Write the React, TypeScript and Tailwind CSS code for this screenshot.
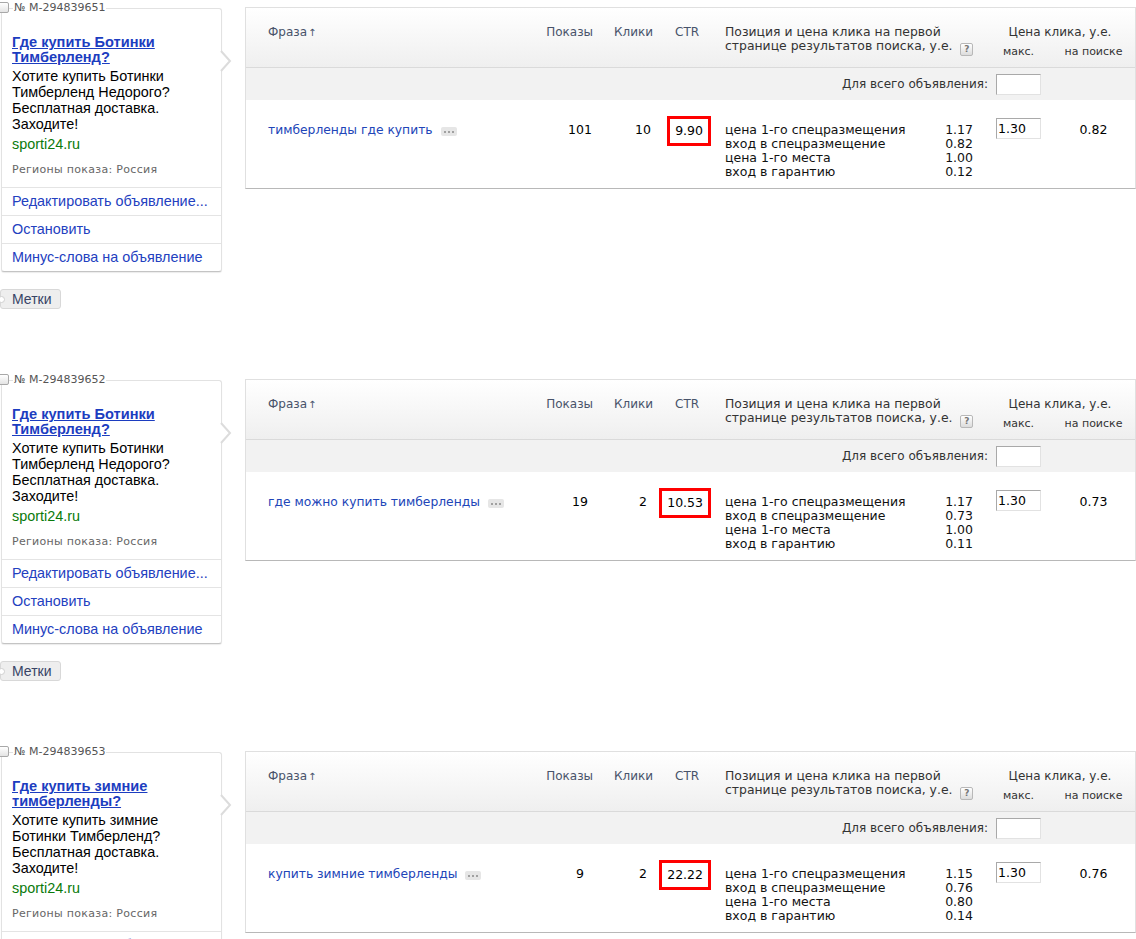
const ADS = [
  {
    id: "294839651",
    title: ["Где купить Ботинки", "Тимберленд?"],
    body: ["Хотите купить Ботинки", "Тимберленд Недорого?", "Бесплатная доставка.", "Заходите!"],
    phrase: "тимберленды где купить",
    shows: "101",
    clicks: "10",
    ctr: "9.90",
    prices: ["1.17", "0.82", "1.00", "0.12"],
    max: "1.30",
    search: "0.82",
  },
  {
    id: "294839652",
    title: ["Где купить Ботинки", "Тимберленд?"],
    body: ["Хотите купить Ботинки", "Тимберленд Недорого?", "Бесплатная доставка.", "Заходите!"],
    phrase: "где можно купить тимберленды",
    shows: "19",
    clicks: "2",
    ctr: "10.53",
    prices: ["1.17", "0.73", "1.00", "0.11"],
    max: "1.30",
    search: "0.73",
  },
  {
    id: "294839653",
    title: ["Где купить зимние", "тимберленды?"],
    body: ["Хотите купить зимние", "Ботинки Тимберленд?", "Бесплатная доставка.", "Заходите!"],
    phrase: "купить зимние тимберленды",
    shows: "9",
    clicks: "2",
    ctr: "22.22",
    prices: ["1.15", "0.76", "0.80", "0.14"],
    max: "1.30",
    search: "0.76",
  },
];

const PRICE_LABELS = ["цена 1-го спецразмещения", "вход в спецразмещение", "цена 1-го места", "вход в гарантию"];

const GRID = "grid grid-cols-[284px_67px_60px_60px_268px_67px_1fr]";

type Ad = (typeof ADS)[number];

function AdCard({ ad }: { ad: Ad }) {
  return (
    <div className="w-[232px] shrink-0 font-['Liberation_Sans',Arial,sans-serif]">
      <div className="relative mt-[8px] ml-[1px] w-[221px] rounded-[3px] border border-[#e2e2e2] border-b-[#c4c4c4] bg-white shadow-[0_1px_1px_rgba(0,0,0,0.08)]">
        {/* checkbox + number, sitting on the top border */}
        <span className="absolute -left-[4px] -top-[7px] h-[11px] w-[11px] rounded-[2px] border border-[#a8a8a8] bg-gradient-to-b from-white to-[#e4e4e4]" />
        <span className="absolute left-[11px] -top-[8px] bg-white px-[1px] font-['DejaVu_Sans',sans-serif] text-[11px] leading-[14px] text-[#555]">
          № M-{ad.id}
        </span>
        <svg className="absolute -right-[11px] top-[41px]" width="12" height="22" viewBox="0 0 12 22">
          <polyline points="1,1 10,11 1,21" fill="white" stroke="#dcdcdc" strokeWidth="2" />
        </svg>

        <div className="pl-[10px] pr-[6px] pt-[26px] pb-[11px]">
          <a className="block text-[14.6px] font-bold leading-[15px] text-[#1c3dc0] underline">
            {ad.title[0]}
            <br />
            {ad.title[1]}
          </a>
          <p className="mt-[3px] text-[14.4px] leading-[16px] text-black">
            {ad.body.map((l, i) => (
              <span key={i} className="block">
                {l}
              </span>
            ))}
          </p>
          <p className="mt-[4px] text-[14.4px] leading-[16px] text-[#0a7a0a]">sporti24.ru</p>
          <p className="mt-[11px] font-['DejaVu_Sans',sans-serif] text-[11px] leading-[13px] tracking-[0.3px] text-[#666]">
            Регионы показа: Россия
          </p>
        </div>
        {["Редактировать объявление...", "Остановить", "Минус-слова на объявление"].map((t) => (
          <div key={t} className="flex h-[28px] items-center border-t border-[#e4e4e4] pl-[10px] text-[14.4px] text-[#2340c0]">
            {t}
          </div>
        ))}
      </div>

      <div className="relative mt-[17px] flex h-[20px] w-[61px] items-center rounded-[3px] border border-[#d8d8d8] bg-[#eeeeee] pl-[11px] text-[14px] text-[#384466]">
        <span className="absolute -left-[3px] top-[6px] h-[7px] w-[7px] rounded-full border border-[#d0d0d0] bg-white" />
        Метки
      </div>
    </div>
  );
}

function PhraseTable({ ad }: { ad: Ad }) {
  return (
    <div className="ml-[13px] mt-[7px] flex-1 self-start border border-[#e0e0e0] border-b-[#b8b8b8] font-['DejaVu_Sans',sans-serif] text-[12px] leading-[14px]">
      {/* header */}
      <div className={`${GRID} h-[60px] border-b border-[#dadada] bg-gradient-to-b from-white to-[#efefef] pt-[17px] text-[#48536a]`}>
        <div className="pl-[22px]">
          Фраза<span className="ml-[1px] text-[10px]">↑</span>
        </div>
        <div className="pr-[4px] text-right">Показы</div>
        <div className="pr-[4px] text-right">Клики</div>
        <div className="pl-[18px]">CTR</div>
        <div className="pl-[8px] text-[12.4px] text-[#333]">
          Позиция и цена клика на первой
          <br />
          странице результатов поиска, у.е.
          <span className="ml-[8px] inline-flex h-[13px] w-[13px] translate-y-[2px] items-center justify-center rounded-[2px] border border-[#b8b8b8] bg-gradient-to-b from-white to-[#dcdcdc] text-[9px] leading-none font-bold text-[#777]">
            ?
          </span>
        </div>
        <div className="col-span-2 text-[#333]">
          <div className="text-center">Цена клика, у.е.</div>
          <div className="mt-[6px] grid grid-cols-[67px_1fr] text-[11px] leading-[13px]">
            <span className="text-center">макс.</span>
            <span className="text-center">на поиске</span>
          </div>
        </div>
      </div>

      {/* whole-ad bid */}
      <div className="flex h-[32px] items-center justify-end gap-[8px] bg-[#f2f2f2] pr-[94px] text-[#333]">
        <span>Для всего объявления:</span>
        <span className="h-[21px] w-[45px] border border-[#a9a9a9] border-b-[#e2e2e2] border-r-[#e2e2e2] bg-white" />
      </div>

      {/* phrase row */}
      <div className={`${GRID} h-[88px] bg-white pt-[23px] text-[12.5px] text-black`}>
        <div className="flex items-start pl-[22px]">
          <a className="text-[12.3px] text-[#2145b8]">{ad.phrase}</a>
          <span className="ml-[8px] mt-[4px] flex h-[9px] w-[16px] items-center justify-center gap-[2px] rounded-[2px] bg-[#e6e6e6]">
            <i className="h-[2px] w-[2px] bg-[#a0a0a0]" />
            <i className="h-[2px] w-[2px] bg-[#a0a0a0]" />
            <i className="h-[2px] w-[2px] bg-[#a0a0a0]" />
          </span>
        </div>
        <div className="pl-[33px] text-center">{ad.shows}</div>
        <div className="pl-[32px] text-center">{ad.clicks}</div>
        <div className="flex justify-end pr-[6px]">
          <span className="-mt-[7px] flex h-[30px] items-center border-[3px] border-[#ff0000] px-[5px]">{ad.ctr}</span>
        </div>
        <div className="pl-[8px] pr-[12px] text-[#111]">
          {PRICE_LABELS.map((l, i) => (
            <div key={l} className="flex justify-between">
              <span>{l}</span>
              <span>{ad.prices[i]}</span>
            </div>
          ))}
        </div>
        <div className="pl-[11px]">
          <div className="-mt-[5px] flex h-[21px] w-[45px] items-center border border-[#a9a9a9] border-b-[#e2e2e2] border-r-[#e2e2e2] bg-white pl-[1px]">
            {ad.max}
          </div>
        </div>
        <div className="text-center">{ad.search}</div>
      </div>
    </div>
  );
}

export default function App() {
  return (
    <div className="min-h-screen w-[1136px] overflow-hidden bg-white">
      {ADS.map((ad) => (
        <div key={ad.id} className="flex h-[372px]">
          <AdCard ad={ad} />
          <PhraseTable ad={ad} />
        </div>
      ))}
    </div>
  );
}
